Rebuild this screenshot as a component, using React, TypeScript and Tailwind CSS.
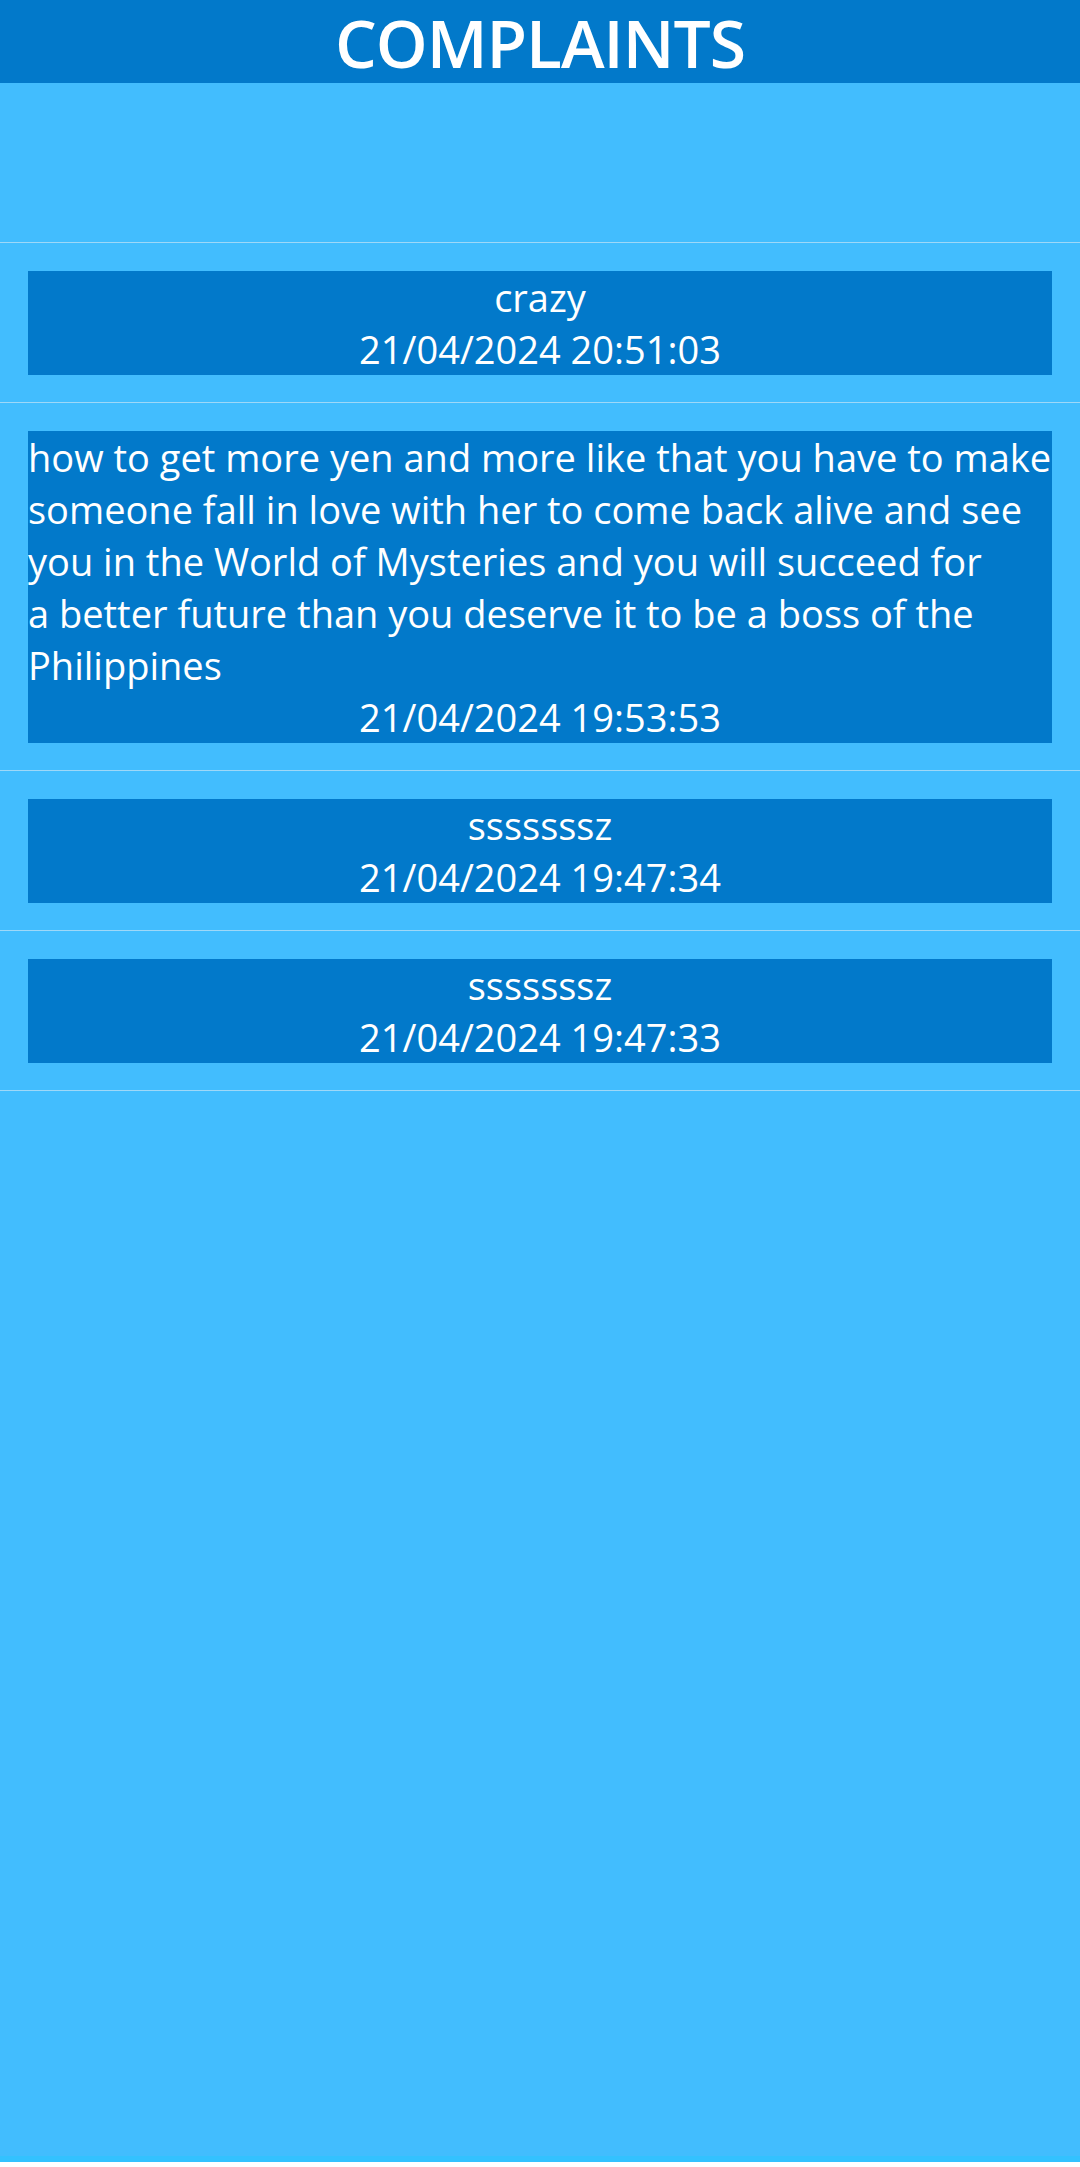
import React from 'react';

interface Complaint {
  text: string;
  date: string;
  left?: boolean;
}

const complaints: Complaint[] = [
  { text: 'crazy', date: '21/04/2024 20:51:03' },
  {
    text: 'how to get more yen and more like that you have to make someone fall in love with her to come back alive and see you in the World of Mysteries and you will succeed for\na better future than you deserve it to be a boss of the Philippines',
    date: '21/04/2024 19:53:53',
    left: true,
  },
  { text: 'sssssssz', date: '21/04/2024 19:47:34' },
  { text: 'sssssssz', date: '21/04/2024 19:47:33' },
];

const App: React.FC = () => {
  return (
    <div
      className="w-[1080px] h-[2162px] bg-[#42bdfe] text-white border-b-[6px] border-[#33c2ff]"
      style={{ fontFamily: '"Open Sans", "Noto Sans", sans-serif' }}
    >
      {/* 标题 */}
      <div className="h-[83px] bg-[#0279ca] flex items-center justify-center">
        <h1 className="text-[66px] font-semibold leading-[80px] tracking-[-1px]">COMPLAINTS</h1>
      </div>

      <div className="h-[159px]" />

      {/* 列表 */}
      <div className="border-t border-[#9ed8f8]">
        {complaints.map((c, i) => (
          <div key={i} className="px-[28px] pt-[28px] pb-[27px] border-b border-[#9ed8f8]">
            <div className="bg-[#0279ca] text-[38px] leading-[52px]">
              <div className={c.left ? 'text-left whitespace-pre-line' : 'text-center'}>{c.text}</div>
              <div className="text-center">{c.date}</div>
            </div>
          </div>
        ))}
      </div>
    </div>
  );
};

export default App;
